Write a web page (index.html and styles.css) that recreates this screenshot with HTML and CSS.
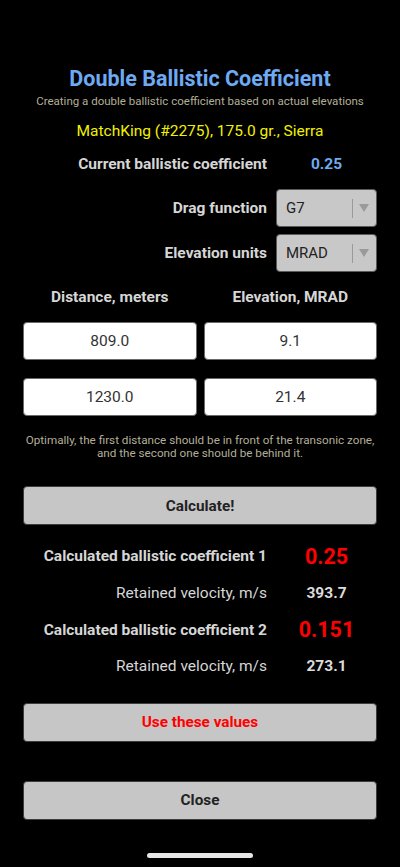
FILE: index.html
```html
<!DOCTYPE html>
<html lang="en">
<head>
    <meta charset="UTF-8">
    <meta name="viewport" content="width=device-width, initial-scale=1.0">
    <title>Double Ballistic Coefficient</title>
    <link rel="stylesheet" href="styles.css">
</head>
<body>
    <div class="container">
        <h1 class="title">Double Ballistic Coefficient</h1>
        <p class="subtitle">Creating a double ballistic coefficient based on actual elevations</p>
        <p class="bullet">MatchKing (#2275), 175.0 gr., Sierra</p>

        <div class="row current">
            <span class="label bold">Current ballistic coefficient</span>
            <span class="value blue">0.25</span>
        </div>

        <div class="row pick">
            <span class="label bold">Drag function</span>
            <div class="picker">
                <span class="picker-text">G7</span>
                <span class="picker-line"></span>
                <span class="picker-arrow"></span>
            </div>
        </div>
        <div class="row pick">
            <span class="label bold">Elevation units</span>
            <div class="picker">
                <span class="picker-text">MRAD</span>
                <span class="picker-line"></span>
                <span class="picker-arrow"></span>
            </div>
        </div>

        <div class="grid heads">
            <span>Distance, meters</span>
            <span>Elevation, MRAD</span>
        </div>
        <div class="grid fields">
            <input type="text" value="809.0">
            <input type="text" value="9.1">
        </div>
        <div class="grid fields second">
            <input type="text" value="1230.0">
            <input type="text" value="21.4">
        </div>

        <p class="note">Optimally, the first distance should be in front of the transonic zone, and the second one should be behind it.</p>

        <button type="button" class="btn calc">Calculate!</button>

        <div class="results">
            <div class="row result">
                <span class="label bold">Calculated ballistic coefficient 1</span>
                <span class="value red">0.25</span>
            </div>
            <div class="row result">
                <span class="label">Retained velocity, m/s</span>
                <span class="value">393.7</span>
            </div>
            <div class="row result">
                <span class="label bold">Calculated ballistic coefficient 2</span>
                <span class="value red">0.151</span>
            </div>
            <div class="row result">
                <span class="label">Retained velocity, m/s</span>
                <span class="value">273.1</span>
            </div>
        </div>

        <button type="button" class="btn use">Use these values</button>
        <button type="button" class="btn close">Close</button>

        <div class="home-bar"></div>
    </div>
</body>
</html>
```

FILE: styles.css
```css
body {
    background-color: #000;
    font-family: Roboto, "Noto Sans", sans-serif;
    color: #d6d6d6;
    margin: 0;
}

.container {
    width: 354px;
    margin: 0 auto;
    padding-top: 67px;
    display: flex;
    flex-direction: column;
}

.title {
    margin: 0;
    font-size: 21.5px;
    line-height: 24px;
    font-weight: 700;
    color: #6eaaf2;
    text-align: center;
}
.subtitle {
    margin: 3px 0 0;
    font-size: 11.5px;
    line-height: 14px;
    color: #b3ae98;
    text-align: center;
}
.bullet {
    margin: 14px 0 0;
    font-size: 15.5px;
    line-height: 18px;
    color: #f2f200;
    text-align: center;
}

/* label on the left, value column under the pickers */
.row {
    display: grid;
    grid-template-columns: 1fr 101px;
    column-gap: 9px;
    align-items: center;
}
.label {
    text-align: right;
    font-size: 15.5px;
    color: #d6d6d6;
}
.bold {
    font-weight: 700;
}
.value {
    text-align: center;
    font-size: 15.5px;
    font-weight: 700;
    color: #dcdcdc;
}
.blue {
    color: #6eaaf2;
}
.red {
    color: #ff0000;
    font-size: 21.5px;
}

.current {
    height: 24px;
    margin-top: 12px;
}
.pick {
    height: 37px;
    margin-top: 8px;
}
.current + .pick {
    margin-top: 13px;
}

.picker {
    height: 38px;
    box-sizing: border-box;
    background-color: #c8c8c8;
    border: 1px solid #5a5a5a;
    border-radius: 4px;
    display: flex;
    align-items: center;
    padding-left: 9px;
}
.picker-text {
    flex: 1;
    font-size: 15px;
    color: #222;
}
.picker-line {
    width: 1px;
    height: 19px;
    background-color: #9a9a9a;
}
.picker-arrow {
    width: 0;
    height: 0;
    margin: 0 7px 0 6px;
    border-left: 5px solid transparent;
    border-right: 5px solid transparent;
    border-top: 8px solid #9a9a9a;
}

.grid {
    display: grid;
    grid-template-columns: 1fr 1fr;
    column-gap: 7px;
}
.heads {
    margin-top: 17px;
    line-height: 18px;
    font-size: 15.5px;
    font-weight: 700;
    text-align: center;
    color: #d6d6d6;
}
.fields {
    margin-top: 16px;
}
.fields.second {
    margin-top: 18px;
}
.fields input {
    height: 38px;
    width: 100%;
    box-sizing: border-box;
    margin: 0;
    border: 1px solid #6a6a6a;
    border-radius: 4px;
    background-color: #fff;
    font-family: Roboto, "Noto Sans", sans-serif;
    font-size: 15.5px;
    color: #333;
    text-align: center;
}

.note {
    margin: 18px 0 0;
    font-size: 11.7px;
    line-height: 13px;
    color: #b3ae98;
    text-align: center;
}

.btn {
    height: 39px;
    width: 100%;
    box-sizing: border-box;
    background-color: #c6c6c6;
    border: 1px solid #3c3c3c;
    border-radius: 4px;
    font-family: Roboto, "Noto Sans", sans-serif;
    font-size: 15.3px;
    font-weight: 700;
    color: #222;
}
.calc {
    margin-top: 26px;
}
.use {
    margin-top: 18px;
    color: #f00;
}
.close {
    margin-top: 39px;
}

.results {
    margin-top: 13px;
}
.result {
    height: 36.7px;
}

.home-bar {
    width: 106px;
    height: 5px;
    margin: 33px auto 0;
    border-radius: 3px;
    background-color: #e6e6e6;
}
```
